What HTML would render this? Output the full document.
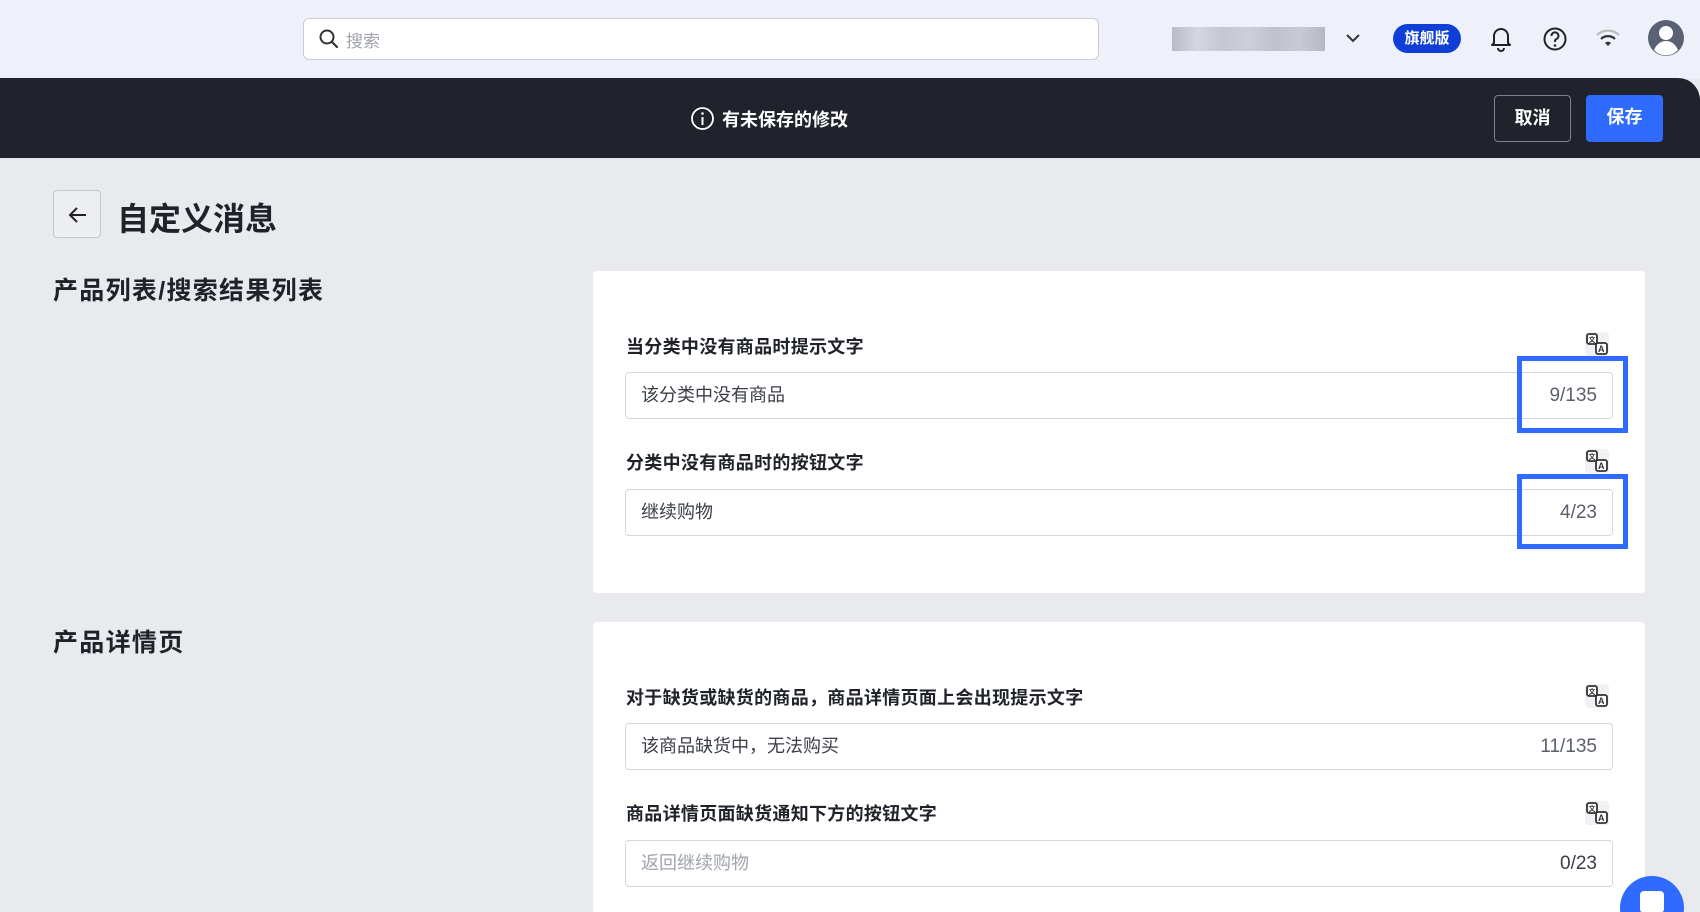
<!DOCTYPE html>
<html><head><meta charset="utf-8"><style>
*{box-sizing:border-box;margin:0;padding:0}
html{width:1700px;height:912px;overflow:hidden}
body{width:1700px;height:912px;overflow:hidden;background:#e8eaee;font-family:"Liberation Sans","Noto Sans CJK SC",sans-serif;position:relative;color:#1f2329}
.top{position:absolute;left:0;top:0;width:1700px;height:79px;background:#eff1fa}
.search{position:absolute;left:303px;top:18px;width:796px;height:42px;background:#fff;border:1px solid #c9ccd3;border-radius:6px}
.search span{position:absolute;left:42px;top:8px;font-size:17px;color:#a0a4ac}
.dark{position:absolute;left:0;top:78px;width:1700px;height:80px;background:#20232b;border-top-right-radius:22px}
.btn{position:absolute;top:95px;height:47px;border-radius:4px;font-size:18px;font-weight:bold;color:#fff;text-align:center;line-height:45px}
.card{position:absolute;left:593px;width:1052px;background:#fff;border-radius:4px}
.lab{position:absolute;left:626px;font-size:18px;letter-spacing:0.3px;font-weight:bold;color:#1f2329}
.inp{position:absolute;left:625px;width:988px;height:47px;border:1px solid #d4d7dc;border-radius:4px;background:#fff;font-size:18px;line-height:45px;padding:0 15px;color:#3a3e45}
.inp .c{position:absolute;right:15px;top:0;color:#5a5f68;font-size:19px}
.tr{position:absolute;left:1584px;width:26px;height:26px}
.hl{position:absolute;left:1517px;width:111px;border:5px solid #2f6bff}
h2{position:absolute;left:53px;font-size:25px;letter-spacing:1.3px;font-weight:bold;color:#1f2329}
</style></head><body>
<div class="top"></div>
<div class="search"><svg style="position:absolute;left:14px;top:9px" width="22" height="22" viewBox="0 0 22 22"><circle cx="9" cy="9" r="6.5" fill="none" stroke="#333" stroke-width="2"/><path d="M14 14l5 5" stroke="#333" stroke-width="2.2" stroke-linecap="round"/></svg><span>搜索</span></div>
<div style="position:absolute;left:1172px;top:27px;width:153px;height:24px;background:linear-gradient(90deg,#b9bcc6,#d4d7e0,#c4c7d0,#cdd0d9,#bfc2cb,#c8cbd4,#b5b8c2)"></div>
<svg style="position:absolute;left:1344px;top:31px" width="18" height="14" viewBox="0 0 18 14"><path d="M3 4l6 6 6-6" fill="none" stroke="#333" stroke-width="2"/></svg>
<div style="position:absolute;left:1393px;top:24px;width:68px;height:29px;border-radius:15px;background:#0f3fd6;color:#fff;font-size:15px;font-weight:bold;text-align:center;line-height:29px">旗舰版</div>
<svg style="position:absolute;left:1488px;top:24px" width="26" height="28" viewBox="0 0 26 28"><path d="M6 19V12a7 7 0 0 1 14 0v7l2 2H4z" fill="none" stroke="#222" stroke-width="2" stroke-linejoin="round"/><path d="M10 24a3 3 0 0 0 6 0" fill="none" stroke="#222" stroke-width="2"/></svg>
<svg style="position:absolute;left:1542px;top:26px" width="26" height="26" viewBox="0 0 26 26"><circle cx="13" cy="13" r="10.5" fill="none" stroke="#222" stroke-width="2"/><path d="M9.5 10a3.5 3.5 0 1 1 5 3c-1.5.8-1.5 1.5-1.5 3" fill="none" stroke="#222" stroke-width="2"/><circle cx="13" cy="19.5" r="1.3" fill="#222"/></svg>
<svg style="position:absolute;left:1594px;top:27px" width="28" height="22" viewBox="0 0 28 22"><path d="M3 8a16 16 0 0 1 22 0" fill="none" stroke="#bbb" stroke-width="2.2"/><path d="M7 12a10 10 0 0 1 14 0" fill="none" stroke="#333" stroke-width="2.2"/><path d="M11 16l3 3 3-3a4 4 0 0 0-6 0z" fill="#333"/></svg>
<svg style="position:absolute;left:1647px;top:18px" width="38" height="40" viewBox="0 0 38 40"><circle cx="19" cy="20" r="18" fill="#5a6174"/><circle cx="19" cy="15" r="7" fill="#fff"/><path d="M7 32c3-7 8-9 12-9s9 2 12 9a16 16 0 0 1-24 0z" fill="#fff"/></svg>
<div class="dark"></div>
<svg style="position:absolute;left:690px;top:106px" width="25" height="25" viewBox="0 0 25 25"><circle cx="12.5" cy="12.5" r="10.5" fill="none" stroke="#fff" stroke-width="1.8"/><circle cx="12.5" cy="7.5" r="1.3" fill="#fff"/><path d="M12.5 11v8" stroke="#fff" stroke-width="2"/></svg>
<div style="position:absolute;left:722px;top:106px;color:#fff;font-size:18px;font-weight:bold">有未保存的修改</div>
<div class="btn" style="left:1494px;width:77px;border:1px solid #7d818a">取消</div>
<div class="btn" style="left:1586px;width:77px;background:#2f6bff">保存</div>
<div style="position:absolute;left:53px;top:190px;width:48px;height:48px;border:1px solid #c3c6cc;border-radius:4px;background:#eceef1"><svg style="position:absolute;left:12px;top:12px" width="24" height="24" viewBox="0 0 24 24"><path d="M20 12H5M11 5l-7 7 7 7" fill="none" stroke="#222" stroke-width="2"/></svg></div>
<div style="position:absolute;left:117px;top:194px;font-size:32px;font-weight:bold">自定义消息</div>
<h2 style="top:271px">产品列表/搜索结果列表</h2>
<h2 style="top:623px">产品详情页</h2>
<div class="card" style="top:271px;height:322px"></div>
<div class="card" style="top:622px;height:300px"></div>
<div class="lab" style="top:333px">当分类中没有商品时提示文字</div>
<div class="inp" style="top:372px">该分类中没有商品<span class="c">9/135</span></div>
<div class="lab" style="top:449px">分类中没有商品时的按钮文字</div>
<div class="inp" style="top:489px">继续购物<span class="c">4/23</span></div>
<div class="lab" style="top:684px">对于缺货或缺货的商品，商品详情页面上会出现提示文字</div>
<div class="inp" style="top:723px">该商品缺货中，无法购买<span class="c">11/135</span></div>
<div class="lab" style="top:800px">商品详情页面缺货通知下方的按钮文字</div>
<div class="inp" style="top:840px;color:#a0a4ac">返回继续购物<span class="c" style="color:#3a3e45">0/23</span></div>
<svg class="tr" style="top:331px" viewBox="0 0 26 26"><rect x="1" y="1" width="24" height="24" rx="4" fill="#f0f1f4"/><rect x="3" y="3" width="10" height="10" rx="2" fill="#fff" stroke="#333" stroke-width="1.8"/><rect x="12" y="12" width="11" height="11" rx="2" fill="#fff" stroke="#333" stroke-width="1.8"/><text x="4.5" y="11" font-size="7" font-weight="bold" fill="#333">文</text><text x="14" y="21" font-size="9" font-weight="bold" fill="#333">A</text></svg>
<svg class="tr" style="top:448px" viewBox="0 0 26 26"><rect x="1" y="1" width="24" height="24" rx="4" fill="#f0f1f4"/><rect x="3" y="3" width="10" height="10" rx="2" fill="#fff" stroke="#333" stroke-width="1.8"/><rect x="12" y="12" width="11" height="11" rx="2" fill="#fff" stroke="#333" stroke-width="1.8"/><text x="4.5" y="11" font-size="7" font-weight="bold" fill="#333">文</text><text x="14" y="21" font-size="9" font-weight="bold" fill="#333">A</text></svg>
<svg class="tr" style="top:683px" viewBox="0 0 26 26"><rect x="1" y="1" width="24" height="24" rx="4" fill="#f0f1f4"/><rect x="3" y="3" width="10" height="10" rx="2" fill="#fff" stroke="#333" stroke-width="1.8"/><rect x="12" y="12" width="11" height="11" rx="2" fill="#fff" stroke="#333" stroke-width="1.8"/><text x="4.5" y="11" font-size="7" font-weight="bold" fill="#333">文</text><text x="14" y="21" font-size="9" font-weight="bold" fill="#333">A</text></svg>
<svg class="tr" style="top:800px" viewBox="0 0 26 26"><rect x="1" y="1" width="24" height="24" rx="4" fill="#f0f1f4"/><rect x="3" y="3" width="10" height="10" rx="2" fill="#fff" stroke="#333" stroke-width="1.8"/><rect x="12" y="12" width="11" height="11" rx="2" fill="#fff" stroke="#333" stroke-width="1.8"/><text x="4.5" y="11" font-size="7" font-weight="bold" fill="#333">文</text><text x="14" y="21" font-size="9" font-weight="bold" fill="#333">A</text></svg>
<div class="hl" style="top:356px;height:77px"></div>
<div class="hl" style="top:474px;height:75px"></div>
<div style="position:absolute;left:1620px;top:876px;width:64px;height:36px;overflow:hidden"><div style="position:absolute;left:0;top:0;width:64px;height:64px;border-radius:50%;background:#2f6bff"><div style="position:absolute;left:20px;top:15px;width:24px;height:22px;background:#fff;border-radius:4px"></div></div></div>
</body></html>
